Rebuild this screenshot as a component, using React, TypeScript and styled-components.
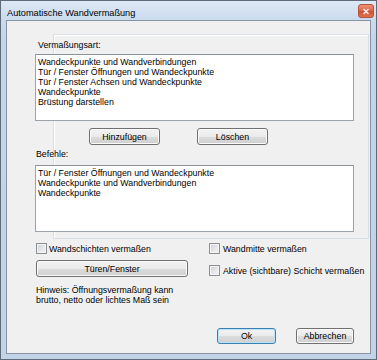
import styled, { createGlobalStyle } from "styled-components"

const GlobalStyle = createGlobalStyle`
  html, body {
    margin: 0;
    padding: 0;
    background: #ffffff;
  }
  * {
    box-sizing: border-box;
  }
`

const uiFont = `"Liberation Sans", Arial, sans-serif`

const Window = styled.div`
  width: 377px;
  height: 360px;
  border: 1px solid #5f6b79;
  background: linear-gradient(#dfe9f5 0px, #cbdbee 18px, #c4d5e9 40px, #c2d3e8 100%);
  display: flex;
  flex-direction: column;
  padding: 0 5px 5px 5px;
  font-family: ${uiFont};
`

const TitleBar = styled.div`
  height: 19px;
  display: flex;
  align-items: flex-start;
  justify-content: space-between;
  padding-left: 1px;
  margin-right: -3px;
`

const TitleText = styled.span`
  font-size: 9.2px;
  line-height: 10px;
  margin-top: 7px;
  color: #000;
`

const CloseButton = styled.div`
  width: 16px;
  height: 14px;
  margin-top: 3px;
  border: 1px solid #b4533b;
  border-radius: 3px;
  background-color: #d95a3c;
  background-image: linear-gradient(#ee9277, #df6446 50%, #d2502f 51%, #e0704f);
  display: flex;
  align-items: center;
  justify-content: center;
`

const Client = styled.div`
  flex: 1;
  position: relative;
  border: 1px solid #8794a3;
  background: #f0f0f0;
  display: flex;
  flex-direction: column;
  padding: 19px 16px 9px 28px;

  &::before {
    content: "";
    position: absolute;
    left: 46px;
    top: 13px;
    width: 314px;
    height: 203px;
    border: 1px solid #d7dee6;
    box-shadow: inset 1px 1px 0 #ffffff;
    pointer-events: none;
  }
`

const Label = styled.div<{ $indent?: number; $top?: number }>`
  position: relative;
  font-size: 8.8px;
  line-height: 10px;
  color: #000;
  margin-left: ${(p) => p.$indent ?? 0}px;
  margin-top: ${(p) => p.$top ?? 0}px;
`

const ListBox = styled.div<{ $top: number }>`
  position: relative;
  margin-top: ${(p) => p.$top}px;
  height: 67px;
  background: #ffffff;
  border: 1px solid #9ca3ab;
  border-top-color: #8a9199;
  padding: 2px 2px;
  display: flex;
  flex-direction: column;
`

const ListItem = styled.div`
  font-size: 8.8px;
  line-height: 10px;
  color: #000;
  white-space: nowrap;
`

const ButtonRow = styled.div`
  position: relative;
  display: flex;
  gap: 37px;
  margin-top: 7px;
  padding-left: 54px;
`

const Button = styled.div<{ $width: number; $height?: number; $default?: boolean; $top?: number }>`
  width: ${(p) => p.$width}px;
  height: ${(p) => p.$height ?? 17}px;
  margin-top: ${(p) => p.$top ?? 0}px;
  flex-shrink: 0;
  border: 1px solid ${(p) => (p.$default ? "#3c7fb1" : "#707070")};
  border-radius: 3px;
  background: linear-gradient(#f2f2f2 0%, #ebebeb 50%, #dddddd 51%, #cfcfcf 100%);
  box-shadow: inset 0 0 0 1px ${(p) => (p.$default ? "#b6e3f8" : "#fbfbfb")};
  display: flex;
  align-items: center;
  justify-content: center;
  font-size: 8.8px;
  line-height: 10px;
  color: #000;
`

const Lower = styled.div`
  position: relative;
  display: flex;
  margin-top: 11px;
  margin-left: 1px;
`

const LeftCol = styled.div`
  width: 173px;
  flex-shrink: 0;
  display: flex;
  flex-direction: column;
`

const RightCol = styled.div`
  display: flex;
  flex-direction: column;
  gap: 11px;
`

const CheckRow = styled.div<{ $gap: number }>`
  display: flex;
  align-items: center;
  gap: ${(p) => p.$gap}px;
  height: 11px;
  font-size: 8.8px;
  line-height: 10px;
  white-space: nowrap;
`

const CheckBox = styled.div`
  width: 11px;
  height: 11px;
  border: 1px solid #8e8f8f;
  background: linear-gradient(135deg, #cbcfd5 0%, #e7e9ec 60%, #f4f4f4 100%);
  box-shadow: inset 0 0 0 1px #f4f4f4;
  flex-shrink: 0;
`

const Hint = styled.div`
  margin-top: 8px;
  font-size: 8.8px;
  line-height: 10px;
  color: #000;
`

const Footer = styled.div`
  margin-top: auto;
  display: flex;
  justify-content: flex-end;
  gap: 20px;
`

const App = () => {
  const types = [
    "Wandeckpunkte und Wandverbindungen",
    "Tür / Fenster Öffnungen und Wandeckpunkte",
    "Tür / Fenster Achsen und Wandeckpunkte",
    "Wandeckpunkte",
    "Brüstung darstellen",
  ]
  const commands = [
    "Tür / Fenster Öffnungen und Wandeckpunkte",
    "Wandeckpunkte und Wandverbindungen",
    "Wandeckpunkte",
  ]

  return (
    <>
      <GlobalStyle />
      <Window>
        <TitleBar>
          <TitleText>Automatische Wandvermaßung</TitleText>
          <CloseButton>
            <svg width="8" height="7" viewBox="0 0 8 7">
              <path d="M1.5 1 L6.5 6 M6.5 1 L1.5 6" stroke="#f4f0ee" strokeWidth="1.6" />
            </svg>
          </CloseButton>
        </TitleBar>

        <Client>
          {/** Vermaßungsart */}
          <Label $indent={3}>Vermaßungsart:</Label>
          <ListBox $top={4}>
            {types.map((t) => (
              <ListItem key={t}>{t}</ListItem>
            ))}
          </ListBox>

          <ButtonRow>
            <Button $width={71}>Hinzufügen</Button>
            <Button $width={71}>Löschen</Button>
          </ButtonRow>

          {/** Befehle */}
          <Label $indent={1} $top={4}>Befehle:</Label>
          <ListBox $top={6}>
            {commands.map((t) => (
              <ListItem key={t}>{t}</ListItem>
            ))}
          </ListBox>

          {/** Options */}
          <Lower>
            <LeftCol>
              <CheckRow $gap={2}>
                <CheckBox />
                Wandschichten vermaßen
              </CheckRow>
              <Button $width={152} $top={6}>Türen/Fenster</Button>
              <Hint>
                Hinweis: Öffnungsvermaßung kann
                <br />
                brutto, netto oder lichtes Maß sein
              </Hint>
            </LeftCol>
            <RightCol>
              <CheckRow $gap={3}>
                <CheckBox />
                Wandmitte vermaßen
              </CheckRow>
              <CheckRow $gap={3}>
                <CheckBox />
                Aktive (sichtbare) Schicht vermaßen
              </CheckRow>
            </RightCol>
          </Lower>

          <Footer>
            <Button $width={59} $height={16} $default>Ok</Button>
            <Button $width={58} $height={16}>Abbrechen</Button>
          </Footer>
        </Client>
      </Window>
    </>
  )
}

export default App
